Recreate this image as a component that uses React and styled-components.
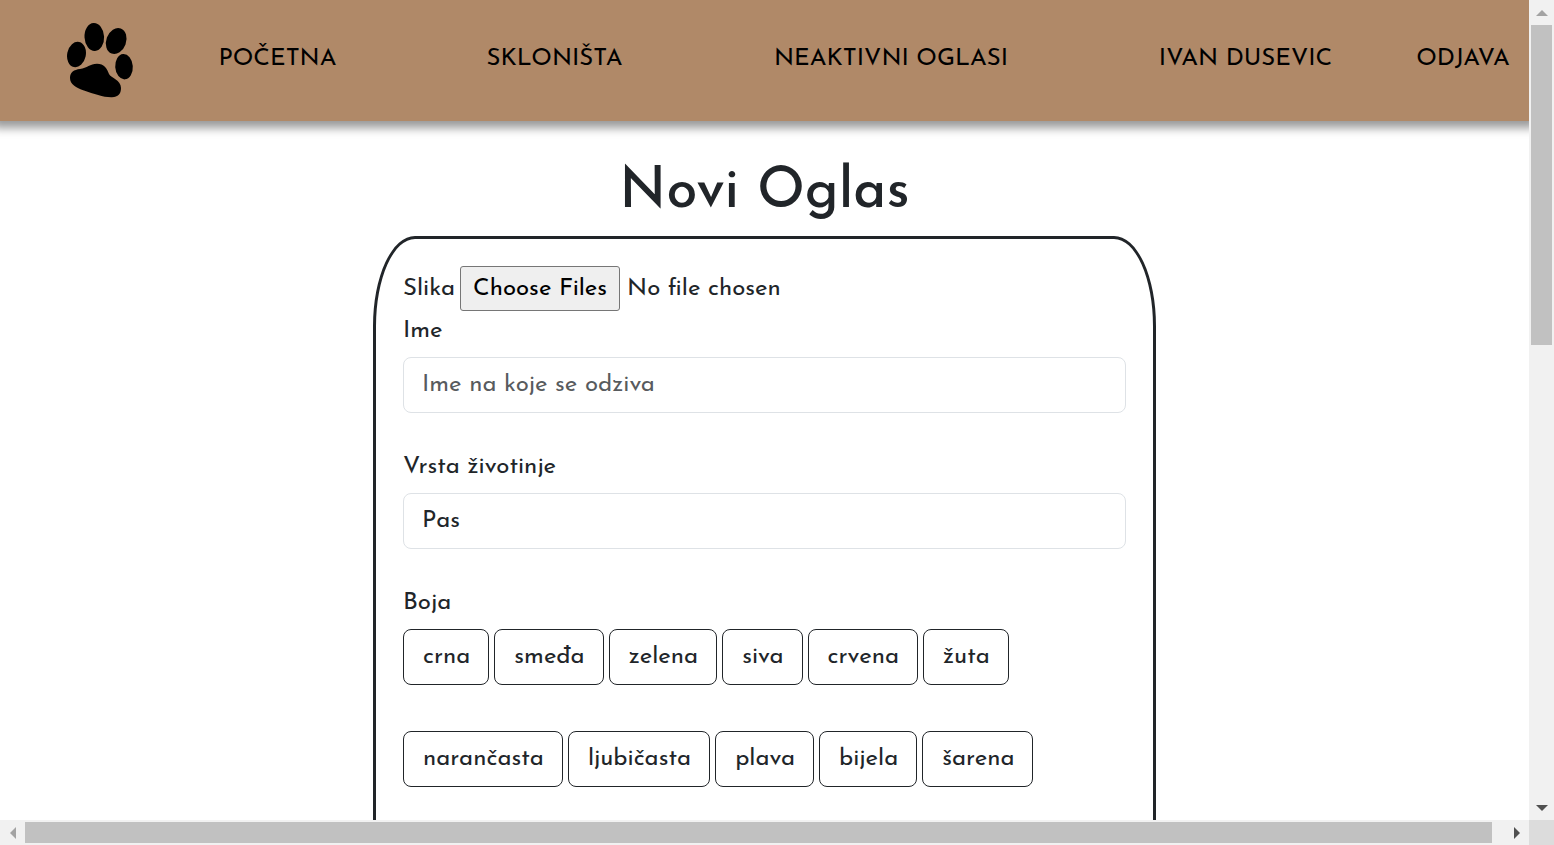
import React from "react";
import styled, { createGlobalStyle } from "styled-components";

const GlobalStyle = createGlobalStyle`
  *, *::before, *::after { box-sizing: border-box; }
  body {
    margin: 0;
    background: #fff;
    color: #212529;
    font-family: "Josefin Sans", Lato, sans-serif;
    font-size: 24px;
    line-height: 36px;
  }
  button, input, select { font: inherit; color: inherit; }
`;

const Shell = styled.div`
  display: grid;
  grid-template-columns: minmax(0, 1fr) 25px;
  grid-template-rows: minmax(0, 1fr) 25px;
  height: 100vh;
`;

const Viewport = styled.div`
  overflow: auto;
  scrollbar-width: none;
`;

const Navbar = styled.nav`
  display: grid;
  grid-template-columns: 144fr 267fr 287fr 386fr 323fr 112fr;
  align-items: center;
  height: 121px;
  padding-right: 10px;
  background: #b08968;
  box-shadow: 0 0 9px 7px rgba(0, 0, 0, 0.4);
`;

const LogoLink = styled.a`
  display: flex;
  padding: 0 0 2px 66px;
  color: #000;
`;

const NavLink = styled.a`
  justify-self: center;
  padding-bottom: 4px;
  color: #000;
  text-decoration: none;
  text-transform: uppercase;
  white-space: nowrap;
`;

const Main = styled.main`
  display: flex;
  flex-direction: column;
  align-items: center;
  padding-top: 36px;
`;

const Title = styled.h1`
  margin: 0;
  padding-bottom: 7px;
  font-size: 56px;
  font-weight: 500;
  line-height: 72px;
`;

const Card = styled.form`
  width: 100%;
  max-width: 783px;
  min-height: 1400px;
  padding: 27px;
  border: 3px solid #212529;
  border-radius: 42px / 90px;
`;

const FileRow = styled.div`
  display: flex;
  align-items: center;
  gap: 5px;
`;

const FileInput = styled.input`
  flex: 1;
  min-width: 0;
  height: 45px;

  &::file-selector-button {
    height: 45px;
    margin: 0 7px 0 0;
    padding: 0 12px;
    border: 1px solid #767676;
    border-radius: 3px;
    background: #efefef;
    color: #000;
    font: inherit;
  }
`;

const Field = styled.div`
  margin-bottom: 34px;
`;

const Label = styled.label`
  display: block;
  padding-top: 2px;
  margin-bottom: 8px;
`;

const controlStyle = `
  display: block;
  width: 100%;
  height: 56px;
  padding: 0 18px;
  border: 1px solid #dee2e6;
  border-radius: 8px;
  background: #fff;
  appearance: none;
`;

const TextInput = styled.input`
  ${controlStyle}
  &::placeholder { color: rgba(33, 37, 41, 0.75); opacity: 1; }
`;

const Select = styled.select`
  ${controlStyle}
`;

const ColourGroup = styled.fieldset`
  min-width: 0;
  margin: 0;
  padding: 0;
  border: 0;
`;

const Legend = styled.legend`
  padding: 2px 0 0;
  margin-bottom: 8px;
`;

const Chips = styled.div`
  display: flex;
  flex-wrap: wrap;
  gap: 46px 5px;
`;

const Chip = styled.button`
  height: 56px;
  padding: 0 18px 0 19px;
  border: 1px solid #212529;
  border-radius: 8px;
  background: #fff;
`;

const Scrollbar = styled.div`
  display: flex;
  flex-direction: ${(p) => (p.$vertical ? "column" : "row")};
  padding: ${(p) => (p.$vertical ? "0 2px" : "2px 0")};
  background: #f1f1f1;
`;

const Arrow = styled.span`
  display: flex;
  flex: 0 0 25px;
  align-items: center;
  justify-content: center;
  color: ${(p) => (p.$active ? "#505050" : "#a3a3a3")};
`;

const Track = styled.div`
  display: flex;
  flex: 1;
  flex-direction: inherit;
`;

const Thumb = styled.div`
  flex: 0 0 ${(p) => p.$size};
  background: #c1c1c1;
`;

const Corner = styled.div`
  background: #dcdcdc;
`;

const arrowPaths = {
  up: "M0 9L6 3L12 9Z",
  down: "M0 3L6 9L12 3Z",
  left: "M9 0L3 6L9 12Z",
  right: "M3 0L9 6L3 12Z",
};

function ScrollArrow({ dir, active }) {
  return (
    <Arrow $active={active}>
      <svg width="12" height="12" viewBox="0 0 12 12" fill="currentColor">
        <path d={arrowPaths[dir]} />
      </svg>
    </Arrow>
  );
}

function Paw() {
  return (
    <svg width="68" height="76" viewBox="66 22 68 76" fill="currentColor" aria-hidden="true">
      <ellipse cx="94.3" cy="37" rx="9.8" ry="14" transform="rotate(-3 94.3 37)" />
      <ellipse cx="116.2" cy="41" rx="9.9" ry="13.4" transform="rotate(20 116.2 41)" />
      <ellipse cx="76.5" cy="54.5" rx="9.3" ry="12.8" transform="rotate(12 76.5 54.5)" />
      <ellipse cx="124" cy="66.7" rx="8.8" ry="12.7" transform="rotate(-4 124 66.7)" />
      <path d="M70 78C70 72 74 69.800 80 69C87 68 90 63.800 97 63.700C104 63.700 107 68 109 74C111 78 121 80 121 88C121 94 118 97 112 97.200C104 97.500 94 94 84 90.500C76 88 70 84 70 78Z" />
    </svg>
  );
}

const links = ["Početna", "Skloništa", "Neaktivni oglasi", "Ivan Dusevic", "Odjava"];
const colours = [
  "crna", "smeđa", "zelena", "siva", "crvena", "žuta",
  "narančasta", "ljubičasta", "plava", "bijela", "šarena",
];

export default function App() {
  return (
    <>
      <GlobalStyle />
      <Shell>
        <Viewport>
          <Navbar>
            <LogoLink href="#" aria-label="Početna">
              <Paw />
            </LogoLink>
            {links.map((name) => (
              <NavLink key={name} href="#">{name}</NavLink>
            ))}
          </Navbar>
          <Main>
            <Title>Novi Oglas</Title>
            <Card>
              <FileRow>
                <label htmlFor="slika">Slika</label>
                <FileInput id="slika" type="file" multiple />
              </FileRow>
              <Field>
                <Label htmlFor="ime">Ime</Label>
                <TextInput id="ime" type="text" placeholder="Ime na koje se odziva" />
              </Field>
              <Field>
                <Label htmlFor="vrsta">Vrsta životinje</Label>
                <Select id="vrsta" defaultValue="Pas">
                  <option>Pas</option>
                </Select>
              </Field>
              <ColourGroup>
                <Legend>Boja</Legend>
                <Chips>
                  {colours.map((name) => (
                    <Chip key={name} type="button">{name}</Chip>
                  ))}
                </Chips>
              </ColourGroup>
            </Card>
          </Main>
        </Viewport>
        <Scrollbar $vertical aria-hidden="true">
          <ScrollArrow dir="up" />
          <Track><Thumb $size="41.6%" /></Track>
          <ScrollArrow dir="down" active />
        </Scrollbar>
        <Scrollbar aria-hidden="true">
          <ScrollArrow dir="left" />
          <Track><Thumb $size="99.2%" /></Track>
          <ScrollArrow dir="right" active />
        </Scrollbar>
        <Corner />
      </Shell>
    </>
  );
}
